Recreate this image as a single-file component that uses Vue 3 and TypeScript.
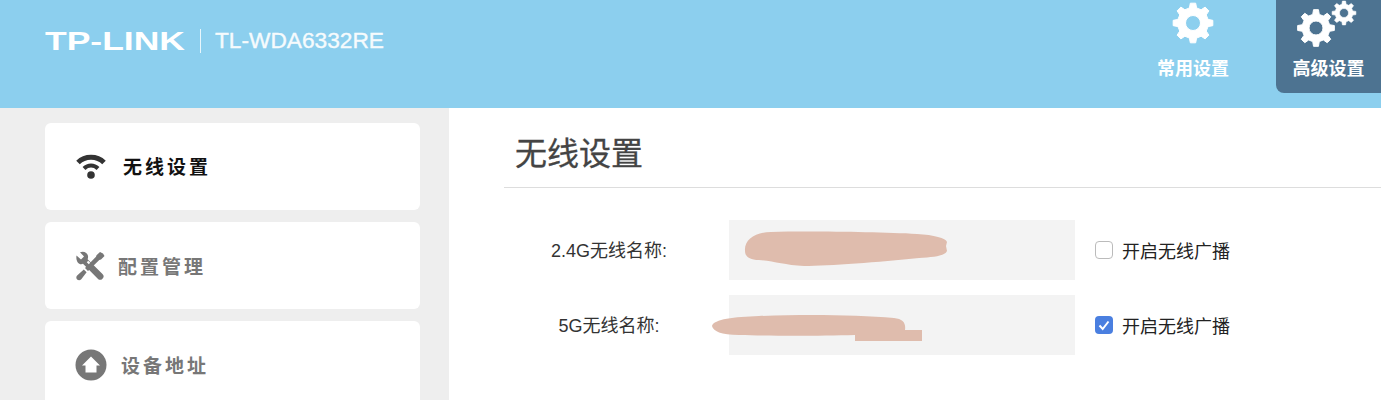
<script setup lang="ts">
interface MenuItem {
  id: string
  label: string
  active?: boolean
}

interface WifiRow {
  label: string
  checked: boolean
}

const menu: MenuItem[] = [
  { id: 'wifi', label: '无线设置', active: true },
  { id: 'tools', label: '配置管理' },
  { id: 'home', label: '设备地址' },
]

const rows: WifiRow[] = [
  { label: '2.4G无线名称:', checked: false },
  { label: '5G无线名称:', checked: true },
]

// builds a gear outline with a round hole, evenodd fill
function gearPath(cx: number, cy: number, outer: number, inner: number, hole: number, teeth = 8) {
  const step = (Math.PI * 2) / teeth
  const pt = (r: number, a: number) =>
    `${(cx + r * Math.cos(a)).toFixed(2)} ${(cy + r * Math.sin(a)).toFixed(2)}`
  let d = ''
  for (let i = 0; i < teeth; i++) {
    const a = i * step - Math.PI / 2
    d += `${i === 0 ? 'M' : 'L'}${pt(inner, a - step * 0.3)} `
    d += `L${pt(outer, a - step * 0.17)} L${pt(outer, a + step * 0.17)} L${pt(inner, a + step * 0.3)} `
  }
  d += `Z M${cx - hole} ${cy} a${hole} ${hole} 0 1 0 ${hole * 2} 0 a${hole} ${hole} 0 1 0 ${-hole * 2} 0 Z`
  return d
}

const commonGear = gearPath(24, 23, 20, 15.5, 7.5)
const bigGear = gearPath(24, 28, 18.5, 14, 7)
const smallGear = gearPath(52, 13, 12, 9, 4.5)
</script>

<template>
  <div class="page">
    <header class="top">
      <div class="brand">
        <span class="logo"><span class="logo__text">TP-LINK</span></span>
        <span class="brand__line"></span>
        <span class="model">TL-WDA6332RE</span>
      </div>
      <nav class="tabs">
        <div class="tab">
          <svg class="tab__icon" width="48" height="48" viewBox="0 0 48 48">
            <path :d="commonGear" fill="#fff" fill-rule="evenodd" stroke="#fff" stroke-width="1" stroke-linejoin="round" />
          </svg>
          <span>常用设置</span>
        </div>
        <div class="tab tab--active">
          <svg class="tab__icon" width="72" height="48" viewBox="0 0 72 48">
            <path :d="bigGear" fill="#fff" fill-rule="evenodd" stroke="#fff" stroke-width="1" stroke-linejoin="round" />
            <path :d="smallGear" fill="#fff" fill-rule="evenodd" stroke="#fff" stroke-width="0.6" stroke-linejoin="round" />
          </svg>
          <span>高级设置</span>
        </div>
      </nav>
    </header>

    <div class="body">
      <aside class="side">
        <div
          v-for="item in menu"
          :key="item.id"
          class="card"
          :class="[{ 'card--active': item.active }, `card--${item.id}`]"
        >
          <svg v-if="item.id === 'wifi'" class="card__icon" width="32" height="28" viewBox="0 0 32 28">
            <path d="M3 10.5C10 3.5 22 3.5 29 10.5" fill="none" stroke="#333" stroke-width="5" />
            <path d="M9 16.5C13 12.5 19 12.5 23 16.5" fill="none" stroke="#333" stroke-width="4" />
            <circle cx="16" cy="23" r="3.8" fill="#333" />
          </svg>
          <svg v-else-if="item.id === 'tools'" class="card__icon" width="30" height="30" viewBox="0 0 30 30">
            <path d="M1.5 4.5 6 8.5l3-3-4-4.3C8.6-.3 12.5 1.4 13 5c.2 1.200 0 2.200-.4 3.200L27.500 23a3.300 3.300 0 0 1-4.700 4.700L8 12.800C4.500 14.500 .5 11 1.500 4.500Z" fill="#777" />
            <path d="M28 2.500 29.500 5 26 8.500 24.300 9 13 20l-3-3L21 5.700l.5-1.500L25 1ZM8.800 18.500l2.800 2.800-5.300 6.900c-1.200 1.400-3 1.500-4.200.3s-1-3 .3-4.200Z" fill="#777" />
            <path d="m12.500 10.500 2 2" stroke="#fff" stroke-width="2" />
          </svg>
          <svg v-else class="card__icon" width="32" height="32" viewBox="0 0 32 32">
            <circle cx="16" cy="16" r="15.500" fill="#777" />
            <path d="M16 7.500 25 16.500h-3.500V23.500h-11V16.500H7Z" fill="#fff" />
          </svg>
          <span class="card__label">{{ item.label }}</span>
        </div>
      </aside>

      <main class="main">
        <h1 class="title">无线设置</h1>
        <div class="form">
          <div v-for="(row, i) in rows" :key="row.label" class="row">
            <label class="row__label">{{ row.label }}</label>
            <div class="field">
              <svg v-if="i === 0" class="scribble" width="240" height="60" viewBox="0 0 240 60">
                <path d="M16 31C15 20 26 12 42 12C80 11 150 12 188 14C205 15 217 18 218 22L217 26L218 31C216 36 205 37 190 38C150 42 100 46 75 46C55 45 45 41 30 40C20 40 16 36 16 31Z" fill="#dfbcad" />
              </svg>
              <svg v-else class="scribble" width="240" height="60" viewBox="0 0 240 60">
                <path d="M-17 31C-15 24 5 22 30 21C80 19 130 20 165 23C174 24 177 28 176 35L193 35V46H126V40C90 41 40 41 10 40C-8 40 -16 36 -17 31Z" fill="#dfbcad" />
              </svg>
            </div>
            <label class="check">
              <span class="check__box" :class="{ 'check__box--on': row.checked }">
                <svg v-if="row.checked" width="18" height="18" viewBox="0 0 18 18">
                  <path d="M4.500 9.500 7.700 13 13.500 5.500" fill="none" stroke="#fff" stroke-width="2" />
                </svg>
              </span>
              开启无线广播
            </label>
          </div>
        </div>
      </main>
    </div>
  </div>
</template>

<style>
html,
body {
  margin: 0;
  height: 400px;
  overflow: hidden;
}
</style>

<style scoped>
.page {
  height: 400px;
  overflow: hidden;
  font-family: "Liberation Sans", "Noto Sans CJK SC", sans-serif;
  background: #fff;
}

.top {
  height: 108px;
  background: #8ccfee;
  display: flex;
  justify-content: space-between;
  align-items: flex-start;
  color: #fff;
}

.brand {
  display: flex;
  align-items: center;
  height: 81px;
  padding-left: 45px;
}

.logo {
  display: block;
  width: 140px;
  height: 26px;
}

.logo__text {
  display: inline-block;
  font-size: 25px;
  line-height: 26px;
  font-weight: 700;
  transform: scaleX(1.42);
  transform-origin: left center;
}

.brand__line {
  width: 1px;
  height: 24px;
  margin: 0 14px 0 15px;
  background: rgba(255, 255, 255, 0.8);
}

.model {
  font-size: 22.7px;
  opacity: 0.92;
  -webkit-text-stroke: 0.4px #fff;
}

.tabs {
  display: flex;
  gap: 47px;
}

.tab {
  width: 72px;
  height: 93px;
  display: flex;
  flex-direction: column;
  align-items: center;
  font-size: 18px;
  font-weight: 700;
  line-height: 22px;
  white-space: nowrap;
}

.tab span {
  margin-top: 10px;
}

.tab--active {
  width: 105px;
  background: #4d7391;
  border-radius: 0 0 0 8px;
}

.tab--active .tab__icon {
  margin-left: -1px;
}

.body {
  display: flex;
  height: 292px;
}

.side {
  width: 449px;
  flex-shrink: 0;
  box-sizing: border-box;
  padding: 15px 29px 0 45px;
  background: #eee;
  display: flex;
  flex-direction: column;
  gap: 12px;
}

.card {
  flex: 0 0 87px;
  box-sizing: border-box;
  background: #fff;
  border-radius: 6px;
  display: flex;
  align-items: center;
  padding-left: 30px;
  color: #777;
  font-size: 19px;
  font-weight: 700;
  letter-spacing: 3px;
  white-space: nowrap;
}

.card__icon {
  flex-shrink: 0;
}

.card--active {
  color: #111;
}

.card__label {
  margin-left: 16px;
}

.card--wifi {
  padding-bottom: 2px;
}

.card--wifi .card__label {
  margin-left: 16px;
}

.card--tools {
  padding-bottom: 0;
}

.card--tools .card__label {
  margin-left: 13px;
}

.card--home .card__label {
  margin-left: 14px;
}

.main {
  flex: 1;
  padding-left: 55px;
  min-width: 0;
}

.title {
  margin: 0;
  height: 80px;
  box-sizing: border-box;
  padding: 26px 0 0 11px;
  font-size: 32px;
  line-height: 40px;
  font-weight: 400;
  color: #444;
  border-bottom: 1px solid #ddd;
  -webkit-text-stroke: 0.3px #444;
}

.form {
  padding-top: 32px;
  display: flex;
  flex-direction: column;
  gap: 15px;
}

.row {
  display: grid;
  grid-template-columns: 225px 346px auto;
  align-items: center;
  height: 60px;
}

.row__label {
  padding-right: 15px;
  padding-bottom: 3px;
  text-align: center;
  font-size: 18px;
  color: #333;
}

.field {
  position: relative;
  height: 60px;
  background: #f3f3f3;
}

.scribble {
  position: absolute;
  left: 0;
  top: 0;
  overflow: visible;
}

.check {
  display: flex;
  align-items: center;
  margin-left: 20px;
  font-size: 18px;
  color: #222;
}

.check__box {
  width: 18px;
  height: 18px;
  box-sizing: border-box;
  margin-right: 9px;
  border: 1px solid #bbb;
  border-radius: 4px;
  background: #fff;
  display: block;
}

.check__box--on {
  border: 0;
  background: #4a7fe0;
}

.check__box svg {
  display: block;
}
</style>
